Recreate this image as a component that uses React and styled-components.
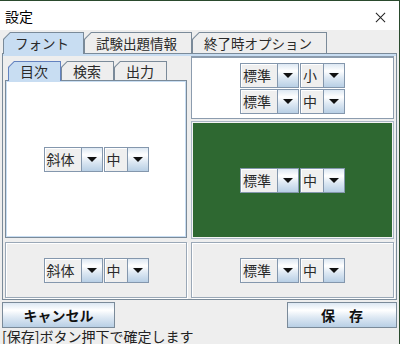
import React from "react";
import styled, { createGlobalStyle } from "styled-components";

const GlobalStyle = createGlobalStyle`
  html, body { margin: 0; padding: 0; background: #ffffff; }
  body { font-family: "Noto Sans CJK JP", "Noto Sans", sans-serif; }
  * { box-sizing: border-box; }
`;

function Combo({ label, w }) {
  return (
    <ComboBox>
      <ComboField $w={w}>{label}</ComboField>
      <ComboArrow />
    </ComboBox>
  );
}

function ComboPair({ style, size }) {
  return (
    <PairRow>
      <Combo label={style} w={36} />
      <Combo label={size} w={22} />
    </PairRow>
  );
}

function App() {
  return (
    <>
      <GlobalStyle />
      <Window>
        <TitleBar>
          <Title>設定</Title>
          <CloseIcon viewBox="0 0 12 12">
            <path d="M1 1L11 11M11 1L1 11" stroke="#222" strokeWidth="1.1" />
          </CloseIcon>
        </TitleBar>
        <Body>
          <TabStrip>
            <Tab $selected>
              <TabFace $selected>フォント</TabFace>
            </Tab>
            <Tab>
              <TabFace>試験出題情報</TabFace>
            </Tab>
            <Tab>
              <TabFace>終了時オプション</TabFace>
            </Tab>
          </TabStrip>
          <TabPanel>
            <LeftColumn>
              <InnerStrip>
                <InnerTab $selected>
                  <InnerFace $selected>目次</InnerFace>
                </InnerTab>
                <InnerTab>
                  <InnerFace>検索</InnerFace>
                </InnerTab>
                <InnerTab>
                  <InnerFace>出力</InnerFace>
                </InnerTab>
              </InnerStrip>
              <InnerContent>
                <ComboPair style="斜体" size="中" />
              </InnerContent>
              <EtchedPanel>
                <ComboPair style="斜体" size="中" />
              </EtchedPanel>
            </LeftColumn>
            <RightColumn>
              <WhitePanel>
                <ComboStack>
                  <ComboPair style="標準" size="小" />
                  <ComboPair style="標準" size="中" />
                </ComboStack>
              </WhitePanel>
              <GreenFrame>
                <GreenPanel>
                  <ComboPair style="標準" size="中" />
                </GreenPanel>
              </GreenFrame>
              <EtchedPanel>
                <ComboPair style="標準" size="中" />
              </EtchedPanel>
            </RightColumn>
          </TabPanel>
          <ButtonRow>
            <Button $w={113}>キャンセル</Button>
            <Button $w={110}>保　存</Button>
          </ButtonRow>
          <Status>[保存]ボタン押下で確定します</Status>
        </Body>
      </Window>
    </>
  );
}
export default App;

const Window = styled.div`
  width: 400px;
  height: 344px;
  display: flex;
  flex-direction: column;
  background: #eeeeee;
  border-top: 1px solid #2a4a2d;
  border-right: 1px solid #2a4a2d;
  overflow: hidden;
`;

const TitleBar = styled.div`
  height: 29px;
  flex: none;
  display: flex;
  align-items: center;
  justify-content: space-between;
  padding: 0 13px 0 5px;
  background: #ffffff;
`;

const Title = styled.span`
  font-size: 14px;
  color: #000;
  margin-top: 1px;
`;

const CloseIcon = styled.svg`
  width: 11px;
  height: 11px;
  margin-top: 3px;
`;

const Body = styled.div`
  flex: 1;
  display: flex;
  flex-direction: column;
  padding: 0 2px;
`;

const TabStrip = styled.div`
  display: flex;
  margin-top: 2px;
  padding-left: 1px;
  height: 21px;
`;

const Tab = styled.div`
  height: ${(p) => (p.$selected ? "22px" : "21px")};
  padding: 1px 1px 0 1px;
  background: #7a8a99;
  clip-path: polygon(0 100%, 0 7px, 7px 0, 100% 0, 100% 100%);
  position: relative;
  z-index: ${(p) => (p.$selected ? 2 : 0)};
`;

const TabFace = styled.div`
  height: 100%;
  padding: 0 14px 0 11px;
  font-size: 13.5px;
  line-height: 20px;
  color: #2a2a2a;
  background: ${(p) => (p.$selected ? "#c8ddf2" : "#eeeeee")};
  clip-path: polygon(0 100%, 0 6.4px, 6.4px 0, 100% 0, 100% 100%);
`;

const TabPanel = styled.div`
  height: 247px;
  flex: none;
  display: grid;
  grid-template-columns: 184px 1fr;
  column-gap: 4px;
  border: 1px solid #7a8a99;
  padding-top: 2px;
  box-shadow: inset 0 2px 0 #c8ddf2;
`;

const LeftColumn = styled.div`
  display: flex;
  flex-direction: column;
  padding-left: 2px;
`;

const InnerStrip = styled.div`
  display: flex;
  margin-top: 5px;
  padding-left: 3px;
  height: 19px;
`;

const InnerTab = styled.div`
  height: ${(p) => (p.$selected ? "20px" : "19px")};
  padding: 1px 1px 0 1px;
  background: ${(p) => (p.$selected ? "#6382bf" : "#7a8a99")};
  clip-path: polygon(0 100%, 0 6px, 6px 0, 100% 0, 100% 100%);
  position: relative;
  z-index: ${(p) => (p.$selected ? 2 : 0)};
`;

const InnerFace = styled.div`
  height: 100%;
  padding: 0 12px 0 11px;
  font-size: 14px;
  line-height: 18px;
  color: #2a2a2a;
  background: ${(p) => (p.$selected ? "#c8ddf2" : "#eeeeee")};
  clip-path: polygon(0 100%, 0 5.4px, 5.4px 0, 100% 0, 100% 100%);
`;

const InnerContent = styled.div`
  height: 158px;
  display: flex;
  align-items: center;
  justify-content: center;
  background: #ffffff;
  border: 1px solid #7a8a99;
  box-shadow: inset 0 0 0 1px #c8ddf2;
  margin-bottom: 4px;
`;

const EtchedPanel = styled.div`
  height: 56px;
  display: flex;
  align-items: center;
  justify-content: center;
  border: 1px solid #9aa8b7;
  box-shadow: inset 1px 1px 0 #ffffff, 1px 1px 0 #ffffff;
`;

const RightColumn = styled.div`
  display: flex;
  flex-direction: column;
  padding-right: 2px;
`;

const WhitePanel = styled.div`
  height: 63px;
  display: flex;
  align-items: center;
  justify-content: center;
  background: #ffffff;
  border: 1px solid #8c9cae;
  border-top-width: 2px;
  margin-bottom: 2px;
`;

const ComboStack = styled.div`
  display: flex;
  flex-direction: column;
  gap: 1px;
`;

const GreenFrame = styled.div`
  height: 118px;
  padding: 1px;
  border: 1px solid #a9b6c4;
  background: #f4f4f4;
  margin-bottom: 3px;
`;

const GreenPanel = styled.div`
  height: 100%;
  display: flex;
  align-items: center;
  justify-content: center;
  background: #2e6831;
`;

const PairRow = styled.div`
  display: flex;
  gap: 1px;
`;

const ComboBox = styled.div`
  display: flex;
  height: 25px;
  border: 1px solid #8497ad;
  background: #eeeeee;
`;

const ComboField = styled.div`
  width: ${(p) => p.$w}px;
  padding-left: 2px;
  font-size: 14px;
  line-height: 23px;
  color: #2a2a2a;
  background: #efefef;
  box-shadow: inset 1px 1px 0 #ffffff;
  white-space: nowrap;
`;

const ComboArrow = styled.div`
  width: 21px;
  border-left: 1px solid #8497ad;
  background: linear-gradient(#dde8f3 0%, #ffffff 30%, #dde8f3 60%, #b8cfe5 100%);
  display: flex;
  align-items: center;
  justify-content: center;

  &::after {
    content: "";
    border-left: 5px solid transparent;
    border-right: 5px solid transparent;
    border-top: 5px solid #111;
  }
`;

const ButtonRow = styled.div`
  display: flex;
  justify-content: space-between;
  margin-top: 2px;
  height: 26px;
  flex: none;
`;

const Button = styled.div`
  width: ${(p) => p.$w}px;
  height: 26px;
  display: flex;
  align-items: center;
  justify-content: center;
  border: 1px solid #7a8a99;
  background: linear-gradient(#dde8f3 0%, #ffffff 30%, #dde8f3 60%, #b8cfe5 100%);
  font-size: 14px;
  font-weight: 700;
  color: #111;
`;

const Status = styled.div`
  margin-top: 0;
  font-size: 14px;
  line-height: 16px;
  color: #222;
  white-space: nowrap;
`;
